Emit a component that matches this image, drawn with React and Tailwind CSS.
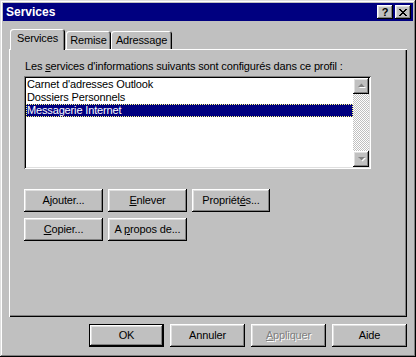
const raised =
  'shadow-[inset_-1px_-1px_#000,inset_1px_1px_#fff,inset_-2px_-2px_#808080,inset_2px_2px_#dfdfdf]'

const Btn = ({ children, className = '', disabled, isDefault }) => (
  <div
    className={`${isDefault ? 'border border-black' : ''} bg-[#c0c0c0] ${className}`}
  >
    <div
      className={`${raised} w-full h-full flex items-center justify-center ${
        disabled ? 'text-[#808080] [text-shadow:1px_1px_0_#fff]' : 'text-black'
      }`}
    >
      <span>{children}</span>
    </div>
  </div>
)

const Arrow = ({ up }) => (
  <div className={`${raised} w-[16px] h-[16px] bg-[#c0c0c0] flex items-center justify-center`}>
    <svg width="9" height="6" viewBox="0 0 9 6">
      {up ? (
        <>
          <path d="M2 5h7L5.5 1.5z" fill="#fff" />
          <path d="M1 4h7L4.5 0.5z" fill="#808080" />
        </>
      ) : (
        <>
          <path d="M2 2h7L5.5 5.5z" fill="#fff" />
          <path d="M1 1h7L4.5 4.5z" fill="#808080" />
        </>
      )}
    </svg>
  </div>
)

const Tab = ({ label, active, width }) => (
  <div
    className={`${width} rounded-t-[3px] bg-[#c0c0c0] flex items-center justify-center shadow-[inset_1px_1px_#fff,inset_-1px_0_#000,inset_-2px_0_#808080] ${
      active ? 'h-[21px] -mb-[1px] relative z-10 pb-[2px]' : 'h-[18px]'
    }`}
  >
    {label}
  </div>
)

const items = ["Carnet d'adresses Outlook", 'Dossiers Personnels', 'Messagerie Internet']

export default function App() {
  return (
    <div
      className="w-[416px] h-[357px] bg-[#c0c0c0] p-[3px] flex flex-col text-[11px] leading-[13px] tracking-[-0.15px] text-black shadow-[inset_-1px_-1px_#000,inset_1px_1px_#dfdfdf,inset_-2px_-2px_#808080,inset_2px_2px_#fff]"
      style={{ fontFamily: '"Liberation Sans", Arial, sans-serif' }}
    >
      <div className="h-[18px] bg-[#000080] flex items-center justify-between pl-[3px] pr-[2px]">
        <span className="text-white font-bold text-[12px] tracking-normal">Services</span>
        <div className="flex gap-[2px]">
          <div className={`${raised} w-[16px] h-[14px] bg-[#c0c0c0] flex items-center justify-center font-bold text-[11px] leading-none`}>
            ?
          </div>
          <div className={`${raised} w-[16px] h-[14px] bg-[#c0c0c0] flex items-center justify-center`}>
            <svg width="8" height="7" viewBox="0 0 8 7" shapeRendering="crispEdges">
              <path
                d="M0 0h2v1H0zM6 0h2v1H6zM1 1h2v1H1zM5 1h2v1H5zM2 2h4v1H2zM3 3h2v1H3zM2 4h4v1H2zM1 5h2v1H1zM5 5h2v1H5zM0 6h2v1H0zM6 6h2v1H6z"
                fill="#000"
              />
            </svg>
          </div>
        </div>
      </div>

      <div className="mt-[8px] ml-[7px] h-[20px] flex items-end">
        <Tab label="Services" active width="w-[55px]" />
        <Tab label="Remise" width="w-[45px] ml-[1px]" />
        <Tab label="Adressage" width="w-[61px]" />
      </div>

      <div className="ml-[6px] w-[398px] h-[268px] pl-[15px] pt-[11px] flex flex-col shadow-[inset_1px_1px_#fff,inset_-1px_-1px_#000,inset_-2px_-2px_#808080]">
        <div className="h-[13px] pl-[1px]">
          Les <span className="underline">s</span>ervices d'informations suivants sont configurés dans ce profil :
        </div>
        <div className="mt-[3px] w-[347px] h-[93px] bg-white p-[2px] flex shadow-[inset_1px_1px_#808080,inset_-1px_-1px_#fff,inset_2px_2px_#000,inset_-2px_-2px_#dfdfdf]">
          <div className="flex-1 flex flex-col">
            {items.map((it, i) => (
              <div
                key={it}
                className={`h-[13px] pl-[1px] ${
                  i === 2 ? 'bg-[#000080] text-white outline outline-1 outline-dotted outline-offset-[-1px] outline-[#ffff7f]' : ''
                }`}
              >
                {it}
              </div>
            ))}
          </div>
          <div className="w-[16px] flex flex-col bg-[repeating-conic-gradient(#c0c0c0_0_25%,#fff_0_50%)] bg-[length:2px_2px]">
            <Arrow up />
            <div className="flex-1" />
            <Arrow />
          </div>
        </div>

        <div className="mt-[20px] flex gap-[5px]">
          <Btn className="w-[79px] h-[23px]">
            A<span className="underline">j</span>outer...
          </Btn>
          <Btn className="w-[79px] h-[23px]">
            <span className="underline">E</span>nlever
          </Btn>
          <Btn className="w-[78px] h-[23px]">
            Propriét<span className="underline">é</span>s...
          </Btn>
        </div>
        <div className="mt-[6px] flex gap-[5px]">
          <Btn className="w-[79px] h-[23px]">
            <span className="underline">C</span>opier...
          </Btn>
          <Btn className="w-[79px] h-[23px]">
            A <span className="underline">p</span>ropos de...
          </Btn>
        </div>
      </div>

      <div className="mt-[7px] mr-[6px] self-end flex gap-[6px]">
        <Btn isDefault className="w-[75px] h-[23px]">OK</Btn>
        <Btn className="w-[75px] h-[23px]">Annuler</Btn>
        <Btn disabled className="w-[75px] h-[23px]">
          <span className="underline">A</span>ppliquer
        </Btn>
        <Btn className="w-[75px] h-[23px]">Aide</Btn>
      </div>
    </div>
  )
}
